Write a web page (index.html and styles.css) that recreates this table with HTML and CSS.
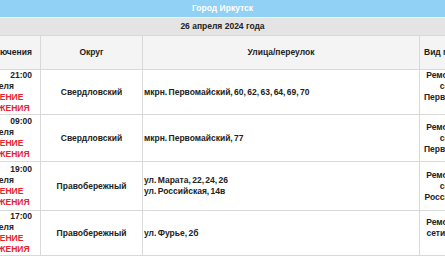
FILE: index.html
```html
<!DOCTYPE html>
<html lang="ru">
<head>
<meta charset="utf-8">
<title>Город Иркутск</title>
<link rel="stylesheet" href="styles.css">
</head>
<body>
<div class="page">
  <div class="city">Город Иркутск</div>
  <div class="date">26 апреля 2024 года</div>
  <div class="scroll">
    <table class="grid">
      <colgroup>
        <col class="c-time"><col class="c-okrug"><col class="c-street"><col class="c-kind">
      </colgroup>
      <thead>
        <tr class="head">
          <th class="th-time">Дата отключения</th>
          <th>Округ</th>
          <th>Улица/переулок</th>
          <th>Вид производимых работ</th>
        </tr>
      </thead>
      <tbody>
        <tr class="h45">
          <td class="time">с 26.04.24<span class="clock">21:00</span><br>до 27 апреля<br><span class="warn">ОГРАНИЧЕНИЕ<br>ДЛЯ ДВИЖЕНИЯ</span></td>
          <td class="okrug">Свердловский</td>
          <td class="street">мкрн. Первомайский, 60, 62, 63, 64, 69, 70</td>
          <td class="kind">Ремонт водопроводной<br>сетей и колодцев<br>Первомайский, 60, 62, 63,<br>64, 69, 70</td>
        </tr>
        <tr class="h47">
          <td class="time">с 26.04.24<span class="clock">09:00</span><br>до 27 апреля<br><span class="warn">ОГРАНИЧЕНИЕ<br>ДЛЯ ДВИЖЕНИЯ</span></td>
          <td class="okrug">Свердловский</td>
          <td class="street">мкрн. Первомайский, 77</td>
          <td class="kind">Ремонт водопроводной<br>сетей и колодцев<br>Первомайский, 77, 79, 81,</td>
        </tr>
        <tr class="h49">
          <td class="time">с 26.04.24<span class="clock">19:00</span><br>до 27 апреля<br><span class="warn">ОГРАНИЧЕНИЕ<br>ДЛЯ ДВИЖЕНИЯ</span></td>
          <td class="okrug">Правобережный</td>
          <td class="street">ул. Марата, 22, 24, 26<br>ул. Российская, 14в</td>
          <td class="kind">Ремонт водопроводной<br>сетей и колодцев<br>Российская, 14в, Марата</td>
        </tr>
        <tr class="h45">
          <td class="time">с 26.04.24<span class="clock">17:00</span><br>до 27 апреля<br><span class="warn">ОГРАНИЧЕНИЕ<br>ДЛЯ ДВИЖЕНИЯ</span></td>
          <td class="okrug">Правобережный</td>
          <td class="street">ул. Фурье, 2б</td>
          <td class="kind">Ремонт водопроводной<br>сети водоснабжения по<br>ул. Фурье, 2б</td>
        </tr>
      </tbody>
    </table>
  </div>
</div>
</body>
</html>
```
FILE: styles.css
```css
html, body {
  margin: 0;
  padding: 0;
  background: #ffffff;
}

body {
  font-family: "Liberation Sans", Arial, sans-serif;
  font-weight: bold;
  font-size: 8.5px;
  color: #222222;
}

.page {
  width: 445px;
  height: 265px;
  overflow: hidden;
}

.city {
  height: 17px;
  line-height: 17px;
  text-align: center;
  color: #ffffff;
  background: #90d1f5;
  border-bottom: 1px solid #eef3f6;
}

.date {
  height: 17px;
  line-height: 17px;
  text-align: center;
  background: #e4e4e4;
}

.scroll {
  overflow: hidden;
}

.grid {
  border-collapse: collapse;
  table-layout: fixed;
  width: 579px;
  margin-left: -46px;
}

.c-time { width: 86px; }
.c-okrug { width: 102px; }
.c-street { width: 277px; }
.c-kind { width: 114px; }

.grid th,
.grid td {
  border: 1px solid #d9d9d9;
  padding: 0 4px;
  line-height: 11px;
  vertical-align: middle;
  font-weight: bold;
  white-space: nowrap;
  overflow: hidden;
}

.head {
  height: 34px;
  background: #f4f4f4;
}

.grid th {
  text-align: center;
}

.grid .th-time {
  padding-right: 12px;
}

.h45 { height: 45px; }
.h47 { height: 47px; }
.h49 { height: 49px; }

.time {
  text-align: left;
}

.clock {
  margin-left: 11px;
}

.warn {
  color: #e3262e;
}

.okrug {
  text-align: center;
}

.grid .street {
  text-align: left;
  padding-left: 1px;
  word-spacing: -1px;
}

.kind {
  text-align: center;
}
```
